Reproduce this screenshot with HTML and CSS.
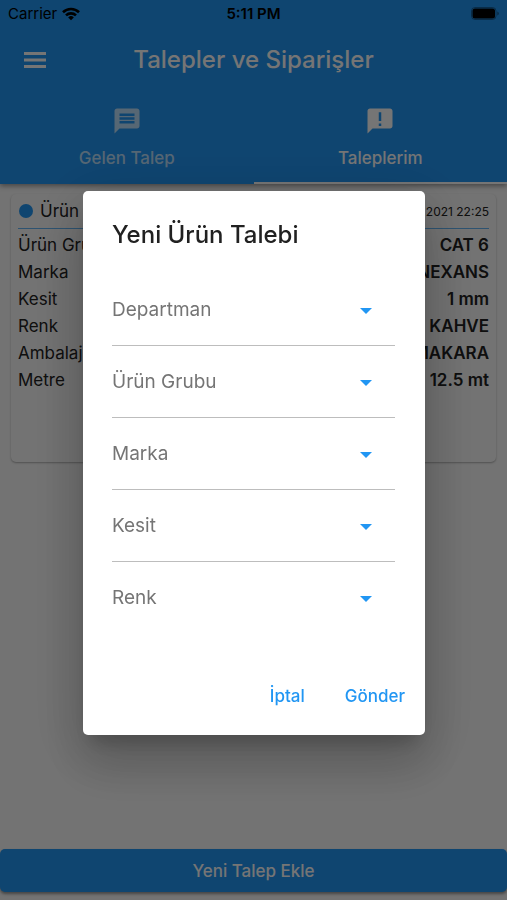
FILE: index.html
```html
<!DOCTYPE html>
<html lang="tr">
<head>
<meta charset="utf-8">
<meta name="viewport" content="width=device-width, initial-scale=1">
<title>Talepler ve Siparişler</title>
<link rel="stylesheet" href="styles.css">
</head>
<body>
<div class="app">
  <header class="header">
    <div class="status">
      <div class="carrier">
        <span>Carrier</span>
        <svg width="18" height="14" viewBox="0 0 18 14" fill="none" stroke="#000" stroke-width="2.6" aria-hidden="true">
          <path d="M1 5.2a11.5 11.5 0 0 1 16 0M4 8.4a7.2 7.2 0 0 1 10 0"/>
          <path d="M9 13.2 6.2 10.4a4 4 0 0 1 5.6 0z" fill="#000" stroke="none"/>
        </svg>
      </div>
      <span class="time">5:11 PM</span>
      <svg class="battery" width="28" height="13" viewBox="0 0 28 13" aria-hidden="true">
        <rect x=".5" y=".5" width="24.500" height="12" rx="3.500" fill="none" stroke="#000" stroke-opacity=".35"/>
        <rect x="1.500" y="1.500" width="22.500" height="10" rx="2.500"/>
        <path d="M26.300 4.500q1.500.500 1.500 2t-1.500 2z" fill-opacity=".4"/>
      </svg>
    </div>
    <div class="appbar">
      <button class="menu" type="button" aria-label="Menü">
        <svg width="24" height="16" viewBox="0 0 24 16" fill="currentColor"><path d="M1 0h22v3H1zM1 6.500h22v3H1zM1 13h22v3H1z"/></svg>
      </button>
      <h1>Talepler ve Siparişler</h1>
    </div>
    <nav class="tabs">
      <a class="tab" href="#gelen">
        <svg width="30" height="30" viewBox="0 0 24 24" fill="currentColor" aria-hidden="true"><path d="M20 2H4c-1.100 0-1.990.900-1.990 2L2 22l4-4h14c1.100 0 2-.900 2-2V4c0-1.100-.900-2-2-2zm-2 12H6v-2h12v2zm0-3H6V9h12v2zm0-3H6V6h12v2z"/></svg>
        <span>Gelen Talep</span>
      </a>
      <a class="tab active" href="#taleplerim">
        <svg width="30" height="30" viewBox="0 0 24 24" fill="currentColor" aria-hidden="true"><path d="M20 2H4c-1.100 0-1.990.900-1.990 2L2 22l4-4h14c1.100 0 2-.900 2-2V4c0-1.100-.900-2-2-2zm-7 14h-2v-2h2v2zm0-4h-2V5h2v7z"/></svg>
        <span>Taleplerim</span>
      </a>
    </nav>
  </header>
  <main class="content">
    <article class="card">
      <div class="card-head">
        <span class="dot"></span>
        <h2>Ürün Talebi</h2>
        <time>2021 22:25</time>
      </div>
      <dl class="details">
        <div><dt>Ürün Grubu</dt><dd>CAT 6</dd></div>
        <div><dt>Marka</dt><dd>NEXANS</dd></div>
        <div><dt>Kesit</dt><dd>1 mm</dd></div>
        <div><dt>Renk</dt><dd>KAHVE</dd></div>
        <div><dt>Ambalaj</dt><dd>MAKARA</dd></div>
        <div><dt>Metre</dt><dd>12.5 mt</dd></div>
      </dl>
    </article>
  </main>
  <button class="add" type="button">Yeni Talep Ekle</button>
</div>
<div class="scrim">
  <form class="dialog" role="dialog" aria-labelledby="dialog-title">
    <h2 id="dialog-title">Yeni Ürün Talebi</h2>
    <div class="fields">
      <div class="field"><select aria-label="Departman"><option>Departman</option></select></div>
      <div class="field"><select aria-label="Ürün Grubu"><option>Ürün Grubu</option></select></div>
      <div class="field"><select aria-label="Marka"><option>Marka</option></select></div>
      <div class="field"><select aria-label="Kesit"><option>Kesit</option></select></div>
      <div class="field"><select aria-label="Renk"><option>Renk</option></select></div>
    </div>
    <div class="actions">
      <button type="button">İptal</button>
      <button type="button">Gönder</button>
    </div>
  </form>
</div>
</body>
</html>
```
FILE: styles.css
```css
* {
  box-sizing: border-box;
}

body {
  margin: 0;
  font-family: Inter, "Liberation Sans", sans-serif;
  color: #212121;
}

h1, h2, dl, dd {
  margin: 0;
}

button, select {
  border: 0;
  background: none;
  font-family: inherit;
}

.app {
  display: flex;
  flex-direction: column;
  min-height: 100vh;
  padding-bottom: 8px;
  background: #fafafa;
}

.header {
  background: #2196f3;
  color: #fff;
  box-shadow: 0 2px 5px rgba(0, 0, 0, 0.4);
}

.status {
  display: grid;
  grid-template-columns: 1fr auto 1fr;
  align-items: center;
  height: 27px;
  padding: 0 8px;
  color: #000;
  font-size: 15px;
}

.carrier {
  display: flex;
  align-items: center;
  gap: 5px;
}

.time {
  font-weight: 600;
}

.battery {
  justify-self: end;
}

.appbar {
  display: grid;
  grid-template-columns: 70px 1fr 70px;
  align-items: center;
  height: 65px;
}

.menu {
  display: flex;
  justify-content: center;
  padding: 0;
  color: #fff;
}

h1 {
  text-align: center;
  font-size: 24px;
  font-weight: 500;
  white-space: nowrap;
}

.tabs {
  display: grid;
  grid-template-columns: 1fr 1fr;
}

.tab {
  display: flex;
  flex-direction: column;
  align-items: center;
  gap: 12px;
  height: 92px;
  padding-top: 14px;
  border-bottom: 2px solid transparent;
  color: rgba(255, 255, 255, 0.7);
  font-size: 17px;
  font-weight: 500;
  line-height: 20px;
  text-decoration: none;
}

.tab.active {
  border-color: #fff;
  color: #fff;
}

.content {
  flex: 1;
  padding: 10px 11px;
}

.card {
  min-height: 268px;
  padding: 0 7px;
  border-radius: 5px;
  background: #fafafa;
  box-shadow: 0 1px 2px rgba(0, 0, 0, 0.3);
}

.card-head {
  display: flex;
  align-items: center;
  gap: 7px;
  height: 35px;
  border-bottom: 1px solid #64b5f6;
}

.dot {
  width: 14px;
  height: 14px;
  margin-left: 1px;
  border-radius: 50%;
  background: #2196f3;
}

.card-head h2 {
  flex: 1;
  font-size: 17px;
  font-weight: 400;
}

.card-head time {
  font-size: 12px;
}

.details {
  padding-top: 3px;
}

.details div {
  display: flex;
  justify-content: space-between;
  font-size: 17px;
  line-height: 27px;
}

.details dd {
  font-weight: 600;
}

.add {
  height: 43px;
  padding: 0;
  border-radius: 5px;
  background: #2196f3;
  box-shadow: 0 2px 3px rgba(0, 0, 0, 0.4);
  color: #fff;
  font-size: 17px;
  font-weight: 500;
}

.scrim {
  position: fixed;
  inset: 0;
  display: flex;
  align-items: center;
  padding: 25px 82px 0 83px;
  background: rgba(0, 0, 0, 0.54);
}

.dialog {
  flex: 1;
  padding: 28px 12px 15px 29px;
  border-radius: 5px;
  background: #fff;
  box-shadow: 0 14px 18px -8px rgba(0, 0, 0, 0.2), 0 30px 48px 4px rgba(0, 0, 0, 0.14), 0 12px 56px 10px rgba(0, 0, 0, 0.12);
}

.dialog h2 {
  font-size: 24px;
  font-weight: 500;
  line-height: 32px;
}

.fields {
  padding: 23px 18px 0 0;
}

.field {
  position: relative;
  height: 72px;
  border-bottom: 1px solid #bdbdbd;
}

.field:last-child {
  border-color: transparent;
}

.field::after {
  content: "";
  position: absolute;
  top: 34px;
  right: 23px;
  border: 6px solid transparent;
  border-top-color: #2196f3;
  border-bottom: 0;
  pointer-events: none;
}

.field select {
  width: 100%;
  height: 72px;
  padding: 0;
  appearance: none;
  color: #757575;
  font-size: 19px;
}

.actions {
  display: flex;
  justify-content: flex-end;
  gap: 24px;
  padding-top: 38px;
}

.actions button {
  height: 48px;
  padding: 0 8px;
  color: #2196f3;
  font-size: 17px;
  font-weight: 500;
}
```
